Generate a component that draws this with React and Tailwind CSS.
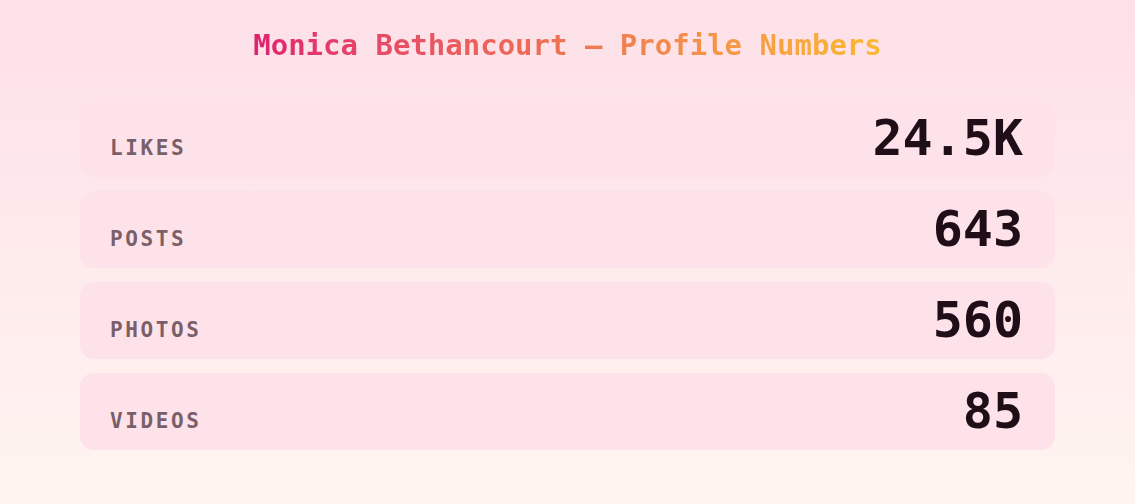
const stats = [
  { label: "Likes", value: "24.5K" },
  { label: "Posts", value: "643" },
  { label: "Photos", value: "560" },
  { label: "Videos", value: "85" },
];

const StatCard = ({ label, value }) => {
  return (
    <div className="flex items-baseline justify-between rounded-[14px] bg-[#fde3e9] pl-[30px] pr-8 pt-[13px] pb-[14px]">
      <span className="text-[21px] font-bold uppercase leading-none tracking-[2.6px] text-[#7a5f6a]">
        {label}
      </span>
      <span className="text-[50px] font-bold leading-none text-[#1f0d18]">
        {value}
      </span>
    </div>
  );
};

export default function App() {
  return (
    <div
      className="min-h-[504px] w-full bg-gradient-to-b from-[#fde0e8] to-[#fff5f0] px-20 pt-7"
      style={{ fontFamily: '"DejaVu Sans Mono", monospace' }}
    >
      {/* Title */}
      <h1 className="text-center text-[29px] font-bold leading-[35px]">
        <span className="bg-gradient-to-r from-[#e01f6f] via-[#ee7352] to-[#fbb931] bg-clip-text text-transparent">
          Monica Bethancourt — Profile Numbers
        </span>
      </h1>

      <div className="mt-[37px] flex flex-col gap-[14px]">
        {stats.map((s) => (
          <StatCard key={s.label} label={s.label} value={s.value} />
        ))}
      </div>
    </div>
  );
}
